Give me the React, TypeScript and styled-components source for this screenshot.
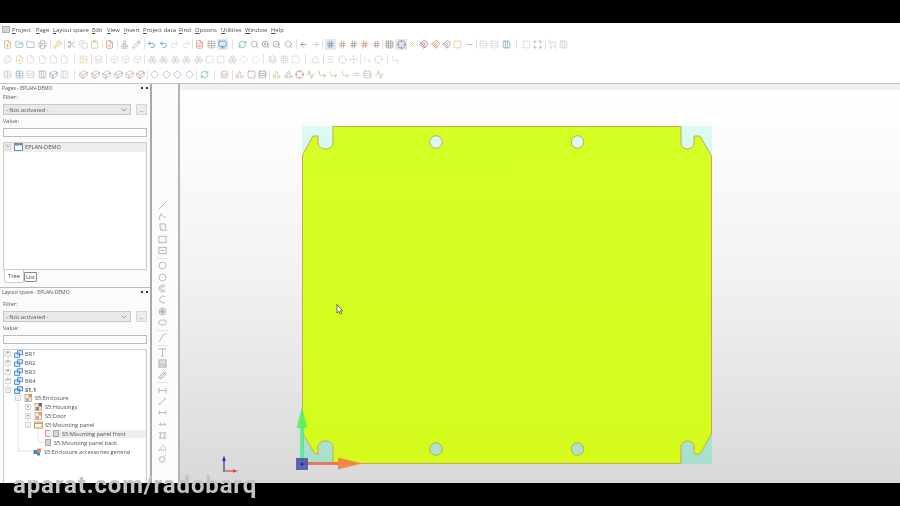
import React from "react";
import styled, { createGlobalStyle } from "styled-components";
import {
  FilePlus, FolderOpen, Folder, Printer, Wrench, Scissors, Copy, Clipboard, FileX, Stamp, Pencil, Undo2, Redo2,
  FileText, Table, Monitor, RefreshCw, Search, ZoomIn, ZoomOut, ArrowLeft, ArrowRight, Grid3x3, Hash, Crosshair, X,
  Magnet, Square, Minus, Rows3, Columns3, Maximize, ShoppingCart, Layers, File, Files, Image, Box, Boxes, Diamond,
  Triangle, AlignCenter, Cuboid, Shapes, Equal, Activity, CornerDownRight, Move, LucideIcon,
} from "lucide-react";

const Global = createGlobalStyle`
  html, body { margin: 0; padding: 0; background: #000; }
  body { width: 900px; height: 506px; overflow: hidden; font-family: "Open Sans", "Liberation Sans", sans-serif; }
`;

const Page = styled.div`
  position: relative;
  width: 900px;
  height: 506px;
  display: flex;
  flex-direction: column;
  background: #000;
  overflow: hidden;
`;
const Bar = styled.div`
  flex: 0 0 23px;
  background: #000;
`;
const Window = styled.div`
  flex: 1;
  min-height: 0;
  display: flex;
  flex-direction: column;
  background: #fff;
  color: #444;
  filter: blur(0.4px);
`;
const MenuBar = styled.div`
  flex: 0 0 13px;
  display: flex;
  align-items: center;
  padding-left: 2px;
  font-size: 5.9px;
  color: #4a4a4a;
`;
const AppGlyph = styled.span`
  width: 8px;
  height: 7px;
  margin-right: 2px;
  background: #d2d6da;
  border: 1px solid #b0b4b8;
  box-sizing: border-box;
`;
const MenuItem = styled.span<{ $w: number }>`
  width: ${(p) => p.$w}px;
  white-space: nowrap;
  &::first-letter { text-decoration: underline; }
`;
const Toolbars = styled.div`
  flex: 0 0 47px;
  display: flex;
  flex-direction: column;
  padding-top: 0.5px;
  box-sizing: border-box;
`;
const ToolRow = styled.div<{ $dim?: number }>`
  height: 15.3px;
  display: flex;
  align-items: center;
  padding-left: 2.3px;
  opacity: ${(p) => p.$dim ?? 1};
`;
const ToolGroup = styled.div`
  display: flex;
  align-items: center;
`;
const Tool = styled.span<{ $color: string; $active?: boolean }>`
  width: 11.4px;
  height: 11px;
  display: flex;
  align-items: center;
  justify-content: center;
  color: ${(p) => p.$color};
  background: ${(p) => (p.$active ? "#d6e8f7" : "transparent")};
`;
const Sep = styled.span<{ $w: number }>`
  width: ${(p) => p.$w}px;
  height: 10px;
  display: flex;
  justify-content: center;
  &::before {
    content: "";
    width: 1px;
    background: ${(p) => (p.$w < 2 ? "transparent" : "#dddddd")};
  }
`;

const Main = styled.div`
  flex: 1;
  min-height: 0;
  display: flex;
  border-top: 1px solid #c4c4c4;
`;
const Side = styled.div`
  flex: 0 0 150px;
  display: flex;
  flex-direction: column;
  background: #fbfbfb;
  border-right: 2.5px solid #a9a9a9;
`;
const PanelBlock = styled.div<{ $h: number }>`
  flex: 0 0 ${(p) => p.$h}px;
  display: flex;
  flex-direction: column;
  padding: 0 2px 0 3px;
  box-sizing: border-box;
  min-height: 0;
  overflow: hidden;
`;
const Divider = styled.div`
  flex: 0 0 1px;
  margin-top: 4px;
  background: #b8b8b8;
`;
const TitleRow = styled.div`
  flex: 0 0 8px;
  margin-left: -1px;
  display: flex;
  align-items: center;
  justify-content: space-between;
  font-size: 5.1px;
  color: #555;
`;
const TitleBtns = styled.span`
  display: flex;
  gap: 3px;
  align-items: center;
`;
const Pin = styled.i`
  width: 2px;
  height: 2px;
  background: #333;
`;
const Label = styled.div<{ $mt?: number }>`
  flex: none;
  font-size: 5.6px;
  height: 7px;
  line-height: 7px;
  color: #555;
  margin-top: ${(p) => p.$mt ?? 0}px;
`;
const FilterRow = styled.div`
  flex: none;
  display: flex;
  gap: 5px;
  margin: 3px 0;
`;
const SelectBox = styled.div`
  width: 128px;
  height: 11px;
  box-sizing: border-box;
  background: #e9e9e9;
  border: 1px solid #c8c8c8;
  display: flex;
  align-items: center;
  justify-content: space-between;
  padding: 0 3px 0 2px;
  font-size: 5.8px;
  color: #555;
`;
const MoreBtn = styled.div`
  width: 11px;
  height: 11px;
  box-sizing: border-box;
  background: #ececec;
  border: 1px solid #d4d4d4;
  text-align: center;
  font-size: 5px;
  line-height: 10px;
  color: #555;
`;
const ValueInput = styled.div`
  flex: none;
  width: 144px;
  height: 9.5px;
  box-sizing: border-box;
  margin: 2.5px 0 4.5px;
  background: #fdfdfd;
  border: 1px solid #bcbcbc;
`;
const TreeBox = styled.div<{ $h: number }>`
  position: relative;
  width: 144px;
  height: ${(p) => p.$h}px;
  box-sizing: border-box;
  background: #fff;
  border: 1px solid #cccccc;
  flex: none;
`;
const Row = styled.div<{ $left: number; $sel?: boolean; $tall?: boolean }>`
  position: relative;
  height: ${(p) => (p.$tall ? 9.5 : 8.9)}px;
  display: flex;
  align-items: center;
  padding-left: ${(p) => p.$left}px;
  font-size: 5.65px;
  color: #505050;
  background: ${(p) => (p.$sel ? "#eeeeee" : "transparent")};
  white-space: nowrap;
`;
const SelBand = styled.span`
  display: flex;
  align-items: center;
  flex: 1;
  height: 100%;
  background: #eeeeee;
  margin-left: -3px;
  padding-left: 3px;
`;
const Expander = styled.span`
  width: 6px;
  height: 6px;
  box-sizing: border-box;
  margin-right: 3px;
  border: 1px solid #d8d8d8;
  background: #f6f6f6;
  display: flex;
  align-items: center;
  justify-content: center;
  font-size: 5px;
  line-height: 1;
  color: #777;
`;
const NodeIcon = styled.span`
  width: 9px;
  height: 8px;
  margin-right: 2px;
  display: flex;
  align-items: center;
  justify-content: center;
`;
const PageChip = styled.span<{ $pink?: boolean; $mr: number }>`
  width: 6px;
  height: 7px;
  box-sizing: border-box;
  margin-right: ${(p) => p.$mr}px;
  background: ${(p) => (p.$pink ? "#fbe4ea" : "#d4d4d4")};
  border: 1px solid ${(p) => (p.$pink ? "#e88aa2" : "#aaaaaa")};
`;
const RowText = styled.span<{ $bold?: boolean }>`
  font-weight: ${(p) => (p.$bold ? 700 : 400)};
`;
const Guides = styled.svg`
  position: absolute;
  left: 0;
  top: 0;
  pointer-events: none;
`;
const Tabs = styled.div`
  flex: 0 0 13px;
  display: flex;
  align-items: flex-start;
  padding-left: 4px;
  margin-top: 0;
`;
const Tab = styled.div<{ $on?: boolean }>`
  height: ${(p) => (p.$on ? 13 : 10)}px;
  width: ${(p) => (p.$on ? 20 : 13)}px;
  margin-top: ${(p) => (p.$on ? 0 : 1.5)}px;
  box-sizing: border-box;
  background: #fff;
  border: 1px solid ${(p) => (p.$on ? "#cccccc" : "#8a8a8a")};
  border-top: ${(p) => (p.$on ? "none" : undefined)};
  border-radius: 0 0 2px 2px;
  font-size: 5.7px;
  text-align: center;
  line-height: ${(p) => (p.$on ? 12 : 8)}px;
  color: #444;
`;
const DrawBar = styled.div`
  flex: 0 0 27.5px;
  box-sizing: border-box;
  background: #fbfbfb;
  border-right: 2px solid #b4b4b4;
  display: flex;
  flex-direction: column;
  align-items: center;
  padding: 115.5px 4px 0 0;
  color: #b0b0b0;
`;
const DrawTool = styled.span`
  width: 11px;
  height: 11.4px;
  display: flex;
  align-items: center;
  justify-content: center;
  flex: none;
`;
const DrawSep = styled.span`
  width: 12px;
  height: 1px;
  margin: 1.5px 0 1px;
  background: #e4e4e4;
  flex: none;
`;
const CanvasWrap = styled.div`
  flex: 1;
  min-width: 0;
  display: flex;
  flex-direction: column;
`;
const CanvasHead = styled.div`
  flex: 0 0 6px;
  background: #f1f1f1;
`;
const Canvas = styled.div`
  position: relative;
  flex: 1;
  min-height: 0;
  background: linear-gradient(180deg, #ffffff 0%, #f3f3f3 45%, #d9d9d9 100%);
`;
const Drawing = styled.svg`
  display: block;
  position: absolute;
  left: 0;
  top: 0;
`;
const Watermark = styled.div`
  position: absolute;
  left: 13px;
  top: 471px;
  font-family: "Roboto", "Liberation Sans", sans-serif;
  font-weight: 700;
  font-size: 24px;
  letter-spacing: 0.85px;
  line-height: 28px;
  color: #c4c4c4;
  white-space: nowrap;
  filter: blur(0.5px);
`;

type T = [LucideIcon, string, boolean?];
const G = "#8a8a8a", L = "#c8c8c8", O = "#d0883a", R = "#c45a4a", LG = "#b8b8b8";

const row1: T[][] = [
  [[FilePlus, O], [FolderOpen, "#5a9ab0"], [Folder, "#7a86b0"], [Printer, G]],
  [[Wrench, "#d99a2a"]],
  [[Scissors, "#6f8fb0"], [Copy, LG], [Clipboard, "#c9a060"]],
  [[FileX, R]],
  [[Stamp, G], [Pencil, G]],
  [[Undo2, "#1f5fa8"], [Undo2, "#1f5fa8"], [Redo2, L], [Redo2, L]],
  [[FileText, R], [Table, G], [Monitor, "#3f6f9f", true]],
  [[RefreshCw, "#3e9a6a"], [Search, G], [ZoomIn, "#607080"], [ZoomOut, "#607080"], [Search, G]],
  [[ArrowLeft, "#2f66b0"], [ArrowRight, "#a8a8a8"]],
  [[Hash, "#6a6a6a", true], [Hash, "#b07050"], [Hash, "#707070"], [Hash, "#b07050"], [Hash, "#a07060"]],
  [[Grid3x3, "#777"], [Crosshair, "#a05050", true], [X, "#d8b060"], [Magnet, "#a02020"], [Magnet, "#c05a2a"], [Magnet, "#8a6070"], [Square, "#d8b040"], [Minus, "#5a7fa8"]],
  [[Rows3, L], [Rows3, L], [Columns3, "#4a86a8"]],
  [[Square, L], [Maximize, "#557"]],
  [[ShoppingCart, LG], [Columns3, LG]],
];
const gaps1 = [4.4, 2.6, 3.8, 3.6, 4.2, 2.4, 8.8, 4, 4.2, 2, 2.8, 8.8, 3.2];
const row2: T[][] = [
  [[Files, L], [FilePlus, "#d8b888"], [File, L], [File, L], [File, L], [File, L]],
  [[Image, "#d8c070"]],
  [[Layers, LG]],
  [[Box, L], [Box, L], [Box, L]],
  [[Boxes, L], [Boxes, L], [Boxes, L], [Boxes, L], [Boxes, L], [Square, L], [Square, L], [Boxes, L]],
  [[Diamond, L], [Diamond, L]],
  [[Layers, "#c0a878"], [Grid3x3, L], [Square, L]],
  [[Triangle, LG]],
  [[AlignCenter, LG], [Crosshair, L], [Move, L]],
  [[CornerDownRight, L], [Crosshair, L]],
  [[CornerDownRight, L]],
];
const gaps2 = [7.6, 3.6, 4.3, 3.8, 0, 6.2, 8.8, 3.6, 2.8, 5.2];
const row3: T[][] = [
  [[Table, LG], [Table, "#6a9ab0"], [Rows3, LG], [Columns3, G], [Cuboid, "#5a80b0"], [Columns3, LG]],
  [[Cuboid, "#b08a6a"], [Cuboid, "#8a8a8a"], [Cuboid, "#8a8a8a"], [Cuboid, "#8a8a8a"], [Cuboid, "#c08a5a"], [Cuboid, "#a07070"]],
  [[Diamond, "#6a90b8"], [Diamond, "#6a90b8"], [Diamond, "#6a90b8"], [Diamond, "#6a90b8"]],
  [[RefreshCw, "#3e9a6a"]],
  [[Layers, "#c07a7a"]],
  [[Shapes, "#b89a60"], [Square, "#b06a8a"], [Rows3, "#6a7a6a"]],
  [[Shapes, "#c0a060"], [Shapes, "#8a9a7a"], [Crosshair, "#b06050"], [Activity, "#8a9a50"], [CornerDownRight, "#b08a70"], [CornerDownRight, "#c09a60"], [CornerDownRight, "#d0a060"], [Equal, "#a0a0a0"], [Rows3, "#a0a0a0"], [Activity, "#b09a50"]],
];
const gaps3 = [7.6, 2.6, 4.4, 8.6, 3.6, 2.8];

function ToolLine({ groups, gaps, dim }: { groups: T[][]; gaps: number[]; dim?: number }) {
  return (
    <ToolRow $dim={dim}>
      {groups.map((g, i) => (
        <React.Fragment key={i}>
          {i > 0 && <Sep $w={gaps[i - 1]} />}
          <ToolGroup>
            {g.map(([Icon, color, active], j) => (
              <Tool key={j} $color={color} $active={active}>
                <Icon size={9} strokeWidth={1.6} />
              </Tool>
            ))}
          </ToolGroup>
        </React.Fragment>
      ))}
    </ToolRow>
  );
}

const menu: [string, number][] = [
  ["Project", 24], ["Page", 17], ["Layout space", 39], ["Edit", 15], ["View", 17], ["Insert", 19],
  ["Project data", 36], ["Find", 16], ["Options", 26], ["Utilities", 24], ["Window", 26], ["Help", 20],
];

const CubeIcon = ({ color = "#3f87c9" }: { color?: string }) => (
  <svg width="9" height="8" viewBox="0 0 9 8" fill="none" stroke={color} strokeWidth="0.9">
    <path d="M3.5.7h5v4h-5zM.6 3h5v4.4h-5z" fill="#dcecf8" />
  </svg>
);
const DocIcon = ({ a, b }: { a: string; b: string }) => (
  <svg width="9" height="8" viewBox="0 0 9 8">
    <rect x="1" y=".5" width="6.5" height="7" fill="#f1ece4" stroke="#a89a88" strokeWidth=".7" />
    <rect x="4.5" y="0" width="3.5" height="3.5" fill={a} />
    <rect x="2" y="4" width="3" height="3" fill={b} />
  </svg>
);

function Panel({ title, treeH, labelTop, children }: { title: string; treeH: number; labelTop: number; children: React.ReactNode }) {
  return (
    <>
      <TitleRow>
        <span>{title}</span>
        <TitleBtns><Pin /><Pin /></TitleBtns>
      </TitleRow>
      <Label $mt={labelTop}>Filter:</Label>
      <FilterRow>
        <SelectBox>
          <span>- Not activated -</span>
          <svg width="6" height="4" viewBox="0 0 6 4" fill="none" stroke="#888" strokeWidth=".8"><path d="M.7.7 3 3 5.3.7" /></svg>
        </SelectBox>
        <MoreBtn>...</MoreBtn>
      </FilterRow>
      <Label>Value:</Label>
      <ValueInput />
      <TreeBox $h={treeH}>{children}</TreeBox>
    </>
  );
}

const stroke = { fill: "none", stroke: "currentColor", strokeWidth: 1 };
const draw = (d: React.ReactNode) => <svg width="9" height="9" viewBox="0 0 10 10" {...stroke}>{d}</svg>;
const Circle = <circle cx="5" cy="5" r="3.8" />;
const drawTools: (React.ReactNode | null)[] = [
  draw(<path d="M1 9 9 1" />),
  draw(<path d="M1 9 3 2l4 4 2-1" />),
  draw(<path d="M2 1h6l1 7H3z" />),
  draw(<rect x="1" y="1.5" width="8" height="7" />),
  draw(<><rect x="1" y="1.5" width="8" height="7" /><path d="M3 5h4" /></>),
  null,
  draw(Circle),
  draw(Circle),
  draw(<><path d="M8 2.5a3.8 3.8 0 1 0 0 5" /><path d="M7 4a2 2 0 1 0 0 2" /></>),
  draw(<path d="M8 2a3.8 3.8 0 1 0 0 6" />),
  draw(<><circle cx="5" cy="5" r="3.8" /><circle cx="5" cy="5" r="2" fill="currentColor" /></>),
  draw(<ellipse cx="5" cy="5" rx="4.2" ry="3" />),
  null,
  draw(<path d="M1 9c3 0 2-4 4-6s3-2 4-2" />),
  null,
  draw(<path d="M1.5 2V1h7v1M5 1v8M3.5 9h3" />),
  draw(<><rect x="1" y="1" width="8" height="8" fill="#e0e0e0" /><path d="M2 8l2-3 2 2 1-1 1 2" /></>),
  draw(<path d="M2 8 8 2M1.5 6l-.5 2 1 1 2-.5L8.5 4 9 2 8 1 6 1.5z" />),
  null,
  draw(<path d="M1 2v6M9 2v6M1 5h8" />),
  draw(<path d="M1 9l8-8M.5 7l2 2M7 .5l2 2" />),
  draw(<path d="M1 5h8M1.5 3v4M8.5 3v4" />),
  draw(<path d="M1 5h8M3 3v4M7 3v4" strokeDasharray="1.5 .7" />),
  draw(<path d="M1 2h8M1 8h8M2.5 2v6M7.5 2v6" />),
  draw(<path d="M1 8h8L6 2z M4 8a2 2 0 0 0-1-2" strokeDasharray="1.5 .7" />),
  draw(<><circle cx="4.5" cy="6" r="3" /><path d="M7 3l2-2" /></>),
];

const plate =
  "M333 126.5H681V143C681 151 694 151 694 143V136H700L711.5 156V434L700 454H694V447C694 439 681 439 681 447V463.5H333V447C333 439 318 439 318 447V454H315L302.5 433V155L313 136H318V143C318 151 333 151 333 143Z";

export default function App() {
  return (
    <Page>
      <Global />
      <Bar />
      <Window>
        <MenuBar>
          <AppGlyph />
          {menu.map(([m, w]) => <MenuItem key={m} $w={w}>{m}</MenuItem>)}
        </MenuBar>
        <Toolbars>
          <ToolLine groups={row1} gaps={gaps1} dim={0.9} />
          <ToolLine groups={row2} gaps={gaps2} dim={0.85} />
          <ToolLine groups={row3} gaps={gaps3} dim={0.85} />
        </Toolbars>
        <Main>
          <Side>
            <PanelBlock $h={186}>
              <Panel title="Pages - EPLAN-DEMO" treeH={128} labelTop={2}>
                <Row $left={1} $tall $sel>
                  <Expander>+</Expander>
                  <NodeIcon>
                    <svg width="9" height="8" viewBox="0 0 9 8">
                      <rect x=".5" y=".5" width="8" height="7" fill="#fff" stroke="#6a90b8" />
                      <rect x=".5" y=".5" width="8" height="2" fill="#6a90b8" />
                    </svg>
                  </NodeIcon>
                  <RowText>EPLAN-DEMO</RowText>
                </Row>
              </Panel>
            </PanelBlock>
            <Tabs>
              <Tab $on>Tree</Tab>
              <Tab>List</Tab>
            </Tabs>
            <Divider />
            <PanelBlock $h={195}>
              <Panel title="Layout space - EPLAN-DEMO" treeH={136} labelTop={5}>
                <Guides width="142" height="110" viewBox="0 0 142 110" fill="none" stroke="#d4d4d4" strokeWidth=".7">
                  <path d="M4 6V44M14 47V101H29M24 56V75M34 78V92H41" />
                </Guides>
                {["BR1", "BR2", "BR3", "BR4"].map((n) => (
                  <Row key={n} $left={1}>
                    <Expander>+</Expander>
                    <NodeIcon><CubeIcon /></NodeIcon>
                    <RowText>{n}</RowText>
                  </Row>
                ))}
                <Row $left={1}>
                  <Expander>-</Expander>
                  <NodeIcon><CubeIcon color="#2f77b9" /></NodeIcon>
                  <RowText $bold>S1.1</RowText>
                </Row>
                <Row $left={11}>
                  <Expander>-</Expander>
                  <NodeIcon><DocIcon a="#e89060" b="#c0b0a0" /></NodeIcon>
                  <RowText>S5:Enclosure</RowText>
                </Row>
                <Row $left={21}>
                  <Expander>+</Expander>
                  <NodeIcon><DocIcon a="#6a6a6a" b="#a08060" /></NodeIcon>
                  <RowText>S5:Housings</RowText>
                </Row>
                <Row $left={21}>
                  <Expander>+</Expander>
                  <NodeIcon><DocIcon a="#e0a050" b="#d8b080" /></NodeIcon>
                  <RowText>S5:Door</RowText>
                </Row>
                <Row $left={21}>
                  <Expander>-</Expander>
                  <NodeIcon>
                    <svg width="9" height="8" viewBox="0 0 9 8">
                      <rect x=".5" y="1" width="8" height="6" fill="#faf3e4" stroke="#c0a060" />
                      <path d="M.5 2.5h8" stroke="#c0a060" />
                    </svg>
                  </NodeIcon>
                  <RowText>S5:Mounting panel</RowText>
                </Row>
                <Row $left={41}>
                  <PageChip $pink $mr={2} />
                  <SelBand>
                    <PageChip $mr={3} />
                    <RowText>S5:Mounting panel front</RowText>
                  </SelBand>
                </Row>
                <Row $left={41}>
                  <PageChip $mr={3} />
                  <RowText>S5:Mounting panel back</RowText>
                </Row>
                <Row $left={29}>
                  <NodeIcon>
                    <svg width="9" height="8" viewBox="0 0 9 8">
                      <rect x=".5" y="2" width="4" height="4" fill="#3f87c9" />
                      <rect x="4" y=".5" width="4" height="4" fill="#e88a50" />
                      <rect x="4" y="4.5" width="3" height="3" fill="#3f87c9" />
                    </svg>
                  </NodeIcon>
                  <RowText>S5:Enclosure accessories general</RowText>
                </Row>
              </Panel>
            </PanelBlock>
          </Side>
          <DrawBar>
            {drawTools.map((d, i) => (d ? <DrawTool key={i}>{d}</DrawTool> : <DrawSep key={i} />))}
          </DrawBar>
          <CanvasWrap>
            <CanvasHead />
            <Canvas>
              <Drawing width="720" height="393" viewBox="180 90 720 393">
                <defs>
                  <linearGradient id="mint" x1="0" y1="0" x2="0" y2="1">
                    <stop offset="0" stopColor="#dcfbf2" />
                    <stop offset="1" stopColor="#a6e0cc" />
                  </linearGradient>
                  <linearGradient id="face" x1="0" y1="0" x2="0" y2="1">
                    <stop offset="0" stopColor="#d4ff26" />
                    <stop offset="1" stopColor="#d4fb1c" />
                  </linearGradient>
                </defs>
                <rect x="302" y="126" width="410" height="338" fill="url(#mint)" />
                <path d={plate} fill="url(#face)" stroke="#c8a850" strokeWidth="1" />
                <circle cx="436" cy="142" r="6.3" fill="#dcf8ee" stroke="#b8b04a" />
                <circle cx="577.5" cy="142" r="6.3" fill="#dcf8ee" stroke="#b8b04a" />
                <circle cx="436" cy="449" r="6.3" fill="#aee2cf" stroke="#b8b04a" />
                <circle cx="577.5" cy="449" r="6.3" fill="#aee2cf" stroke="#b8b04a" />
                <rect x="300" y="425" width="4" height="36" fill="#4fe88f" opacity=".8" />
                <path d="M302 407 307.5 428H296.5Z" fill="#52f060" opacity=".85" />
                <rect x="306" y="462" width="34" height="3" fill="#f06a5a" opacity=".9" />
                <path d="M338 457.5 362 463.5 338 469.5Z" fill="#f58040" opacity=".92" />
                <rect x="296" y="458" width="12" height="12" fill="#4a4ea6" opacity=".85" />
                <circle cx="302" cy="464" r="1.5" fill="#2020c0" />
                <path d="M224 471V459" stroke="#2030b0" strokeWidth="1.2" />
                <path d="M224 455.5 225.8 461H222.2Z" fill="#2030b0" />
                <path d="M224 471H235" stroke="#e04040" strokeWidth="1.2" />
                <path d="M238 471 233 469.2V472.8Z" fill="#e04040" />
                <circle cx="224" cy="471" r="1.2" fill="#30b060" />
                <path d="M337 304.5V313L339 311.3 340.3 314 341.6 313.4 340.3 310.8H342.6Z" fill="#fff" stroke="#333" strokeWidth=".7" />
              </Drawing>
            </Canvas>
          </CanvasWrap>
        </Main>
      </Window>
      <Bar />
      <Watermark>aparat.com/radobarq</Watermark>
    </Page>
  );
}
